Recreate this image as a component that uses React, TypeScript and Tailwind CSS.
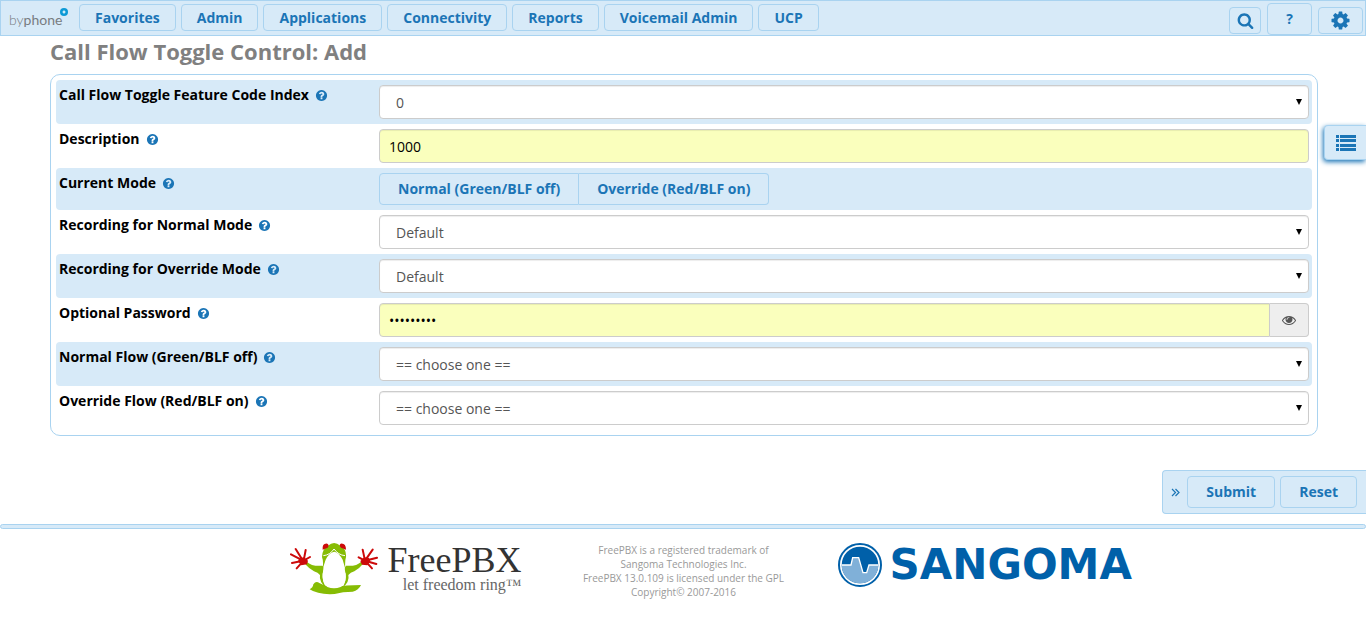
import { useState, type ReactNode } from 'react';

const MENU = ['Favorites', 'Admin', 'Applications', 'Connectivity', 'Reports', 'Voicemail Admin', 'UCP'];

const ICONS = {
  search:
    'M1216 832q0-185-131.500-316.500t-316.500-131.500-316.500 131.500-131.500 316.500 131.500 316.500 316.500 131.500 316.500-131.500 131.500-316.500zm512 832q0 52-38 90t-90 38q-54 0-90-38l-343-342q-179 124-399 124-143 0-273.500-55.500t-225-150-150-225-55.500-273.500 55.500-273.500 150-225 225-150 273.500-55.500 273.500 55.500 225 150 150 225 55.500 273.500q0 220-124 399l343 343q37 37 37 90z',
  cog:
    'M1152 896q0-106-75-181t-181-75-181 75-75 181 75 181 181 75 181-75 75-181zm512-109v222q0 12-8 23t-20 13l-185 28q-19 54-39 91 35 50 107 138 10 12 10 25t-9 23q-27 37-99 108t-94 71q-12 0-26-9l-138-108q-44 23-91 38-16 136-29 186-7 28-36 28h-222q-14 0-24.500-8.500t-11.500-21.500l-28-184q-49-16-90-37l-141 107q-10 9-25 9-14 0-25-11-126-114-165-168-7-10-7-23 0-12 8-23 15-21 51-66.500t54-70.500q-27-50-41-99l-183-27q-13-2-21-12.500t-8-23.500v-222q0-12 8-23t19-13l186-28q14-46 39-92-40-57-107-138-10-12-10-24 0-10 9-23 26-36 98.500-107.500t94.500-71.500q13 0 26 10l138 107q44-23 91-38 16-136 29-186 7-28 36-28h222q14 0 24.500 8.500t11.500 21.500l28 184q49 16 90 37l142-107q9-9 24-9 13 0 25 10 129 119 165 170 7 8 7 22 0 12-8 23-15 21-51 66.500t-54 70.500q26 50 41 98l183 28q13 2 21 12.500t8 23.500z',
  help:
    'M1024 1376v-192q0-14-9-23t-23-9h-192q-14 0-23 9t-9 23v192q0 14 9 23t23 9h192q14 0 23-9t9-23zm256-672q0-88-55.500-163t-138.500-116-170-41q-243 0-371 213-15 24 8 42l132 100q7 6 19 6 16 0 25-12 53-68 86-92 34-24 86-24 48 0 85.500 26t37.500 59q0 38-20 61t-68 45q-63 28-115.500 86.500t-52.500 125.500v36q0 14 9 23t23 9h192q14 0 23-9t9-23q0-19 21.500-49.500t54.500-49.500q32-18 49-28.500t46-35 44.500-48 28-60.500 12.500-81zm384 192q0 209-103 385.500t-279.500 279.500-385.500 103-385.500-103-279.500-279.500-103-385.500 103-385.500 279.500-279.500 385.500-103 385.500 103 279.500 279.500 103 385.500z',
  eye:
    'M1664 960q-152-236-381-353 61 104 61 225 0 185-131.500 316.500t-316.500 131.500-316.500-131.500-131.500-316.500q0-121 61-225-229 117-381 353 133 205 333.500 326.500t434.500 121.500 434.500-121.500 333.500-326.500zm-720-384q0-20-14-34t-34-14q-125 0-214.500 89.500t-89.500 214.500q0 20 14 34t34 14 34-14 14-34q0-86 61-147t147-61q20 0 34-14t14-34zm848 384q0 34-20 69-140 230-376.500 368.500t-499.500 138.500-499.500-139-376.500-368q-20-35-20-69t20-69q140-229 376.500-368t499.500-139 499.500 139 376.500 368q20 35 20 69z',
};

function Icon({ name, className }: { name: keyof typeof ICONS; className: string }) {
  return (
    <svg viewBox="0 0 1792 1792" fill="currentColor" className={className} aria-hidden="true">
      <path d={ICONS[name]} />
    </svg>
  );
}

const buttonClass =
  'flex items-center justify-center rounded border border-[#a9d3f0] bg-[#d7eaf8] text-sm font-bold text-[#1b75b6] hover:bg-[#c5e0f4]';
const fieldClass =
  'h-[34px] w-full rounded border border-[#cccccc] text-sm outline-none shadow-[inset_0_1px_1px_rgba(0,0,0,0.075)] focus:border-[#66afe9]';

function Row({ label, htmlFor, shaded, children }: {
  label: string;
  htmlFor?: string;
  shaded?: boolean;
  children: ReactNode;
}) {
  return (
    <div className={`flex rounded-sm px-[3px] py-[5px] ${shaded ? 'bg-[#d7eaf8]' : ''}`}>
      <div className="flex h-5 w-80 shrink-0 items-center gap-[6px]">
        <label htmlFor={htmlFor} className="text-sm leading-5 font-bold text-black">
          {label}
        </label>
        <Icon name="help" className="h-[13px] w-[13px] text-[#1b75b6]" />
      </div>
      <div className="min-w-0 flex-1">{children}</div>
    </div>
  );
}

function SelectField({ id, options }: { id: string; options: string[] }) {
  return (
    <div className="relative">
      <select id={id} className={`${fieldClass} appearance-none bg-white px-4 pt-[2px] text-[#555555]`}>
        {options.map((o) => (
          <option key={o}>{o}</option>
        ))}
      </select>
      <svg viewBox="0 0 6 6" className="pointer-events-none absolute top-[14px] right-[7px] h-[6px] w-[6px]">
        <path d="M0 0h6L3 6z" fill="#000" />
      </svg>
    </div>
  );
}

function ByphoneLogo() {
  return (
    <svg viewBox="0 0 62 26" className="h-[26px] w-[62px]" role="img" aria-label="byphone">
      <text x="0" y="20" fontSize="14" fontFamily="Lato, sans-serif" fontWeight="300" fill="#777c80">
        by<tspan fontWeight="400">phone</tspan>
      </text>
      <circle cx="55" cy="7" r="4" fill="#0d9ad6" />
      <path d="M55 5.500v3M53.500 7h3" stroke="#fff" strokeWidth="1.200" />
    </svg>
  );
}

function FrogLogo() {
  return (
    <svg viewBox="6 12 264 156" className="h-[52px] w-[88px]" aria-hidden="true">
      <g fill="#86bc04">
        {/* arms and flanks */}
        <path d="M56 68Q72 83 104 80Q110 90 104 104Q102 126 116 148Q92 128 96 108Q90 100 78 97Q62 88 52 76Z" />
        <path d="M220 68Q204 83 174 80Q166 90 173 104Q176 126 162 148Q186 128 181 108Q187 100 199 97Q215 88 224 76Z" />
        {/* head */}
        <path d="M102 54Q102 30 120 20Q138 4 157 20Q176 30 174 54Q170 66 172 90L164 62Q152 40 139 38Q124 40 113 62L104 90Q107 66 102 54Z" />
        {/* leaf */}
        <path d="M65 151Q75 146 76 136Q84 124 94 132Q116 144 140 144Q174 138 219 138Q212 154 194 158Q164 158 140 165Q90 168 65 151Z" />
      </g>
      <path d="M139 40Q160 48 168 84Q182 130 158 144Q138 152 118 144Q96 128 108 84Q116 48 139 40Z" fill="#fff" />
      <path d="M106 50Q126 48 138 30Q151 48 171 50" fill="none" stroke="#fff" strokeWidth="3" />
      <path d="M104 32Q102 12 118 14Q125 18 119 26ZM158 14Q174 12 174 32L159 26Q152 18 158 14Z" fill="#cc0a0a" />
      <g fill="none" stroke="#cc0a0a" strokeLinecap="round" strokeWidth="6">
        <path d="M45 65L9 46M45 65L23 30M47 65L53 33M47 65L66 54M45 65L12 72M44 68L26 88M231 65L212 55M231 65L224 32M231 65L254 32M231 65L267 56M231 65L265 75M231 65L252 88" />
      </g>
      <path d="M34 58L48 55L60 65L57 76L40 79L30 67ZM243 57L229 55L217 66L222 77L238 79L247 67Z" fill="#cc0a0a" />
    </svg>
  );
}

function FreePbxLogo() {
  return (
    <div className="flex items-start gap-[10px]">
      <FrogLogo />
      <div className="flex flex-col items-end font-['Liberation_Serif',serif] text-[#333333]">
        <span className="text-4xl leading-[34px]">FreePBX</span>
        <span className="text-base leading-4 text-[#666666]">let freedom ring™</span>
      </div>
    </div>
  );
}

function SangomaLogo() {
  return (
    <div className="flex items-center gap-2">
      <svg viewBox="36 27 132 132" className="h-11 w-11" aria-hidden="true">
        <circle cx="102" cy="93" r="63" fill="#fff" stroke="#0060a9" strokeWidth="6" />
        <circle cx="102" cy="93" r="55" fill="#0060a9" />
        <path d="M47 93H75L80 71H98L111 116H122L129 93H157A55 55 0 0 1 47 93Z" fill="#80b0d8" />
        <path d="M47 93H75L80 71H98L111 116H122L129 93H157" fill="none" stroke="#fff" strokeWidth="4" />
      </svg>
      <span className="w-[248px] font-['DejaVu_Sans',sans-serif] text-[42px] leading-11 font-bold text-[#0060a9]">SANGOMA</span>
    </div>
  );
}

export default function App() {
  const [showPassword, setShowPassword] = useState(false);

  return (
    <div className="relative bg-white font-['Open_Sans',sans-serif] text-sm">
      <header className="flex h-9 items-start border border-[#a9d3f0] bg-[#d7eaf8] pr-[2px] pl-2">
        <a href="#" className="mt-1 mr-2 flex">
          <ByphoneLogo />
        </a>
        <nav className="mt-[3px] flex flex-1 gap-[5px]">
          {MENU.map((item) => (
            <button key={item} type="button" className={`${buttonClass} h-[27px] px-[15px]`}>
              {item}
            </button>
          ))}
        </nav>
        <div className="flex h-full items-end gap-[6px]">
          <button type="button" aria-label="Search" className={`${buttonClass} mb-px h-[27px] w-8`}>
            <Icon name="search" className="h-[17px] w-[17px]" />
          </button>
          <button type="button" className={`${buttonClass} h-8 w-[45px]`}>
            ?
          </button>
          <button type="button" aria-label="Settings" className={`${buttonClass} mb-px h-[27px] w-[45px]`}>
            <Icon name="cog" className="h-[21px] w-[21px]" />
          </button>
        </div>
      </header>

      <main className="pr-12 pl-[50px]">
        <h1 className="h-[38px] text-[22px] leading-[30px] font-bold text-[#808080]">Call Flow Toggle Control: Add</h1>

        <form id="daynight" className="rounded-[10px] border border-[#a9d3f0] p-[5px]" onSubmit={(e) => e.preventDefault()}>
          <Row label="Call Flow Toggle Feature Code Index" htmlFor="itemid" shaded>
            <SelectField id="itemid" options={['0', '1', '2', '3', '4', '5', '6', '7', '8', '9']} />
          </Row>
          <Row label="Description" htmlFor="description">
            <input
              id="description"
              type="text"
              defaultValue="1000"
              className={`${fieldClass} bg-[#faffbd] px-[9px] text-black`}
            />
          </Row>
          <Row label="Current Mode" shaded>
            <div role="radiogroup" aria-label="Current Mode" className="flex">
              <label className={`${buttonClass} h-8 cursor-pointer rounded-r-none px-[18px]`}>
                <input type="radio" name="state" value="DAY" className="sr-only" />
                Normal (Green/BLF off)
              </label>
              <label className={`${buttonClass} h-8 cursor-pointer rounded-l-none border-l-0 px-[18px]`}>
                <input type="radio" name="state" value="NIGHT" className="sr-only" />
                Override (Red/BLF on)
              </label>
            </div>
          </Row>
          <Row label="Recording for Normal Mode" htmlFor="day_recording">
            <SelectField id="day_recording" options={['Default']} />
          </Row>
          <Row label="Recording for Override Mode" htmlFor="night_recording" shaded>
            <SelectField id="night_recording" options={['Default']} />
          </Row>
          <Row label="Optional Password" htmlFor="password">
            <div className="flex">
              <input
                id="password"
                type={showPassword ? 'text' : 'password'}
                defaultValue="123456789"
                className={`${fieldClass} rounded-r-none bg-[#faffbd] px-[9px] text-black`}
              />
              <button
                type="button"
                aria-label="Show password"
                onClick={() => setShowPassword((v) => !v)}
                className="flex w-[39px] shrink-0 items-center justify-center rounded-r border border-l-0 border-[#cccccc] bg-[#eeeeee] text-[#555555]"
              >
                <Icon name="eye" className="h-[14px] w-[14px]" />
              </button>
            </div>
          </Row>
          <Row label="Normal Flow (Green/BLF off)" htmlFor="goto0" shaded>
            <SelectField id="goto0" options={['== choose one ==']} />
          </Row>
          <Row label="Override Flow (Red/BLF on)" htmlFor="goto1">
            <SelectField id="goto1" options={['== choose one ==']} />
          </Row>
        </form>
      </main>

      {/* Slide-out list tab */}
      <button
        type="button"
        aria-label="Show list"
        className="absolute top-[125px] right-0 flex h-[35px] w-[42px] items-center justify-center rounded-l border border-r-0 border-[#a9d3f0] bg-[#d7eaf8] text-[#1b75b6] shadow-[-1px_2px_5px_#1b75b6]"
      >
        <svg viewBox="0 0 20 16" className="h-4 w-5" fill="currentColor" aria-hidden="true">
          <path d="M0 0h3v3H0zM4 0h16v3H4zM0 4h3v3H0zM4 4h16v3H4zM0 9h3v3H0zM4 9h16v3H4zM0 13h3v3H0zM4 13h16v3H4z" />
        </svg>
      </button>

      <div className="mt-[34px] flex justify-end">
        <div className="flex h-11 items-center gap-[5px] rounded-l border border-r-0 border-[#a9d3f0] bg-[#d7eaf8] pr-[9px] pl-2">
          <button type="button" aria-label="Hide actions" className="mr-[2px] flex text-[#1b75b6]">
            <svg viewBox="0 0 9 9" className="h-[9px] w-[9px]" fill="none" stroke="currentColor" strokeWidth="1.200">
              <path d="M1 1l3.500 3.500L1 8M4.500 1L8 4.500 4.500 8" />
            </svg>
          </button>
          <button type="submit" form="daynight" className={`${buttonClass} h-8 px-[18px]`}>
            Submit
          </button>
          <button type="reset" form="daynight" className={`${buttonClass} h-8 px-[18px]`}>
            Reset
          </button>
        </div>
      </div>

      <footer className="mt-[10px]">
        <div className="h-[5px] rounded-sm border border-[#a9d3f0] bg-[#d7eaf8]" />
        <div className="flex items-start justify-center pt-[14px] pl-[61px]">
          <FreePbxLogo />
          <p className="mr-[49px] ml-[57px] w-[210px] text-center text-[10px] leading-[14px] text-[#999999]">
            FreePBX is a registered trademark of
            <br />
            Sangoma Technologies Inc.
            <br />
            FreePBX 13.0.109 is licensed under the GPL
            <br />
            Copyright© 2007-2016
          </p>
          <SangomaLogo />
        </div>
      </footer>
    </div>
  );
}
